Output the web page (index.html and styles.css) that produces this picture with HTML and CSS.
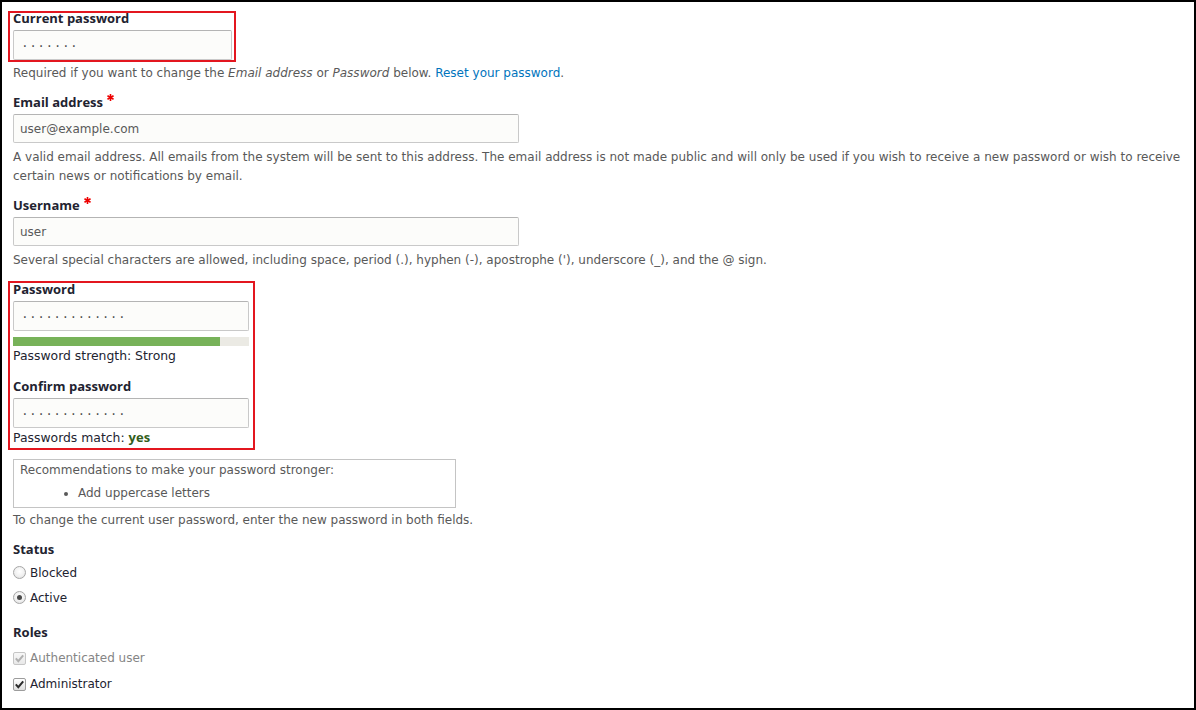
FILE: index.html
```html
<!DOCTYPE html>
<html lang="en">
<head>
<meta charset="utf-8">
<title>Account settings</title>
<link rel="stylesheet" href="styles.css">
</head>
<body>
<div class="page">
  <div class="highlight highlight-current">
    <label class="label label-in-box" for="current-pass">Current password</label>
    <input id="current-pass" class="text-input input-current pass-dots" type="text" value="·······" readonly>
  </div>
  <div class="description desc-after-box">Required if you want to change the <em>Email address</em> or <em>Password</em> below. <a href="#" class="link">Reset your password</a>.</div>

  <div class="form-item">
    <label class="label" for="mail">Email address <span class="required"><svg width="7" height="7" viewBox="0 0 7 7"><g stroke="#e00" stroke-width="1.6" stroke-linecap="butt"><line x1="3.5" y1="0" x2="3.5" y2="7"/><line x1="0.47" y1="1.75" x2="6.53" y2="5.25"/><line x1="0.47" y1="5.25" x2="6.53" y2="1.75"/></g></svg></span></label>
    <input id="mail" class="text-input input-wide" type="text" value="user@example.com" readonly>
    <div class="description">A valid email address. All emails from the system will be sent to this address. The email address is not made public and will only be used if you wish to receive a new password or wish to receive certain news or notifications by email.</div>
  </div>

  <div class="form-item">
    <label class="label" for="name">Username <span class="required"><svg width="7" height="7" viewBox="0 0 7 7"><g stroke="#e00" stroke-width="1.6" stroke-linecap="butt"><line x1="3.5" y1="0" x2="3.5" y2="7"/><line x1="0.47" y1="1.75" x2="6.53" y2="5.25"/><line x1="0.47" y1="5.25" x2="6.53" y2="1.75"/></g></svg></span></label>
    <input id="name" class="text-input input-wide" type="text" value="user" readonly>
    <div class="description">Several special characters are allowed, including space, period (.), hyphen (-), apostrophe ('), underscore (_), and the @ sign.</div>
  </div>

  <div class="highlight highlight-pass">
    <label class="label label-in-box" for="pass1">Password</label>
    <input id="pass1" class="text-input input-pass pass-dots" type="text" value="·············" readonly>
    <div class="strength-meter"><div class="strength-fill" style="width: 87.7%"></div></div>
    <div class="strength-text">Password strength: Strong</div>
    <label class="label label-confirm" for="pass2">Confirm password</label>
    <input id="pass2" class="text-input input-pass input-confirm pass-dots" type="text" value="·············" readonly>
    <div class="match-text">Passwords match: <span class="match-yes">yes</span></div>
  </div>

  <div class="suggestions">
    <div class="suggestions-title">Recommendations to make your password stronger:</div>
    <ul class="suggestions-list">
      <li>Add uppercase letters</li>
    </ul>
  </div>
  <div class="description desc-pass">To change the current user password, enter the new password in both fields.</div>

  <div class="label label-group">Status</div>
  <div class="option-row radio-row">
    <span class="radio"></span><span class="option-label">Blocked</span>
  </div>
  <div class="option-row radio-row">
    <span class="radio is-checked"></span><span class="option-label">Active</span>
  </div>

  <div class="label label-group label-roles">Roles</div>
  <div class="option-row check-row check-first">
    <span class="checkbox is-disabled"><svg width="11" height="11" viewBox="0 0 11 11"><path d="M1.8 5.4 L4.3 8.2 L9.2 2.4" fill="none" stroke="#b0b0b0" stroke-width="2"/></svg></span><span class="option-label is-disabled">Authenticated user</span>
  </div>
  <div class="option-row check-row">
    <span class="checkbox"><svg width="11" height="11" viewBox="0 0 11 11"><path d="M1.8 5.4 L4.3 8.2 L9.2 2.4" fill="none" stroke="#2b2b2b" stroke-width="2"/></svg></span><span class="option-label">Administrator</span>
  </div>
</div>
</body>
</html>
```

FILE: styles.css
```css
html, body {
  margin: 0;
  padding: 0;
  background: #fff;
}

.page {
  box-sizing: border-box;
  width: 1196px;
  height: 710px;
  border: 2px solid #000;
  padding: 9px 11px 0 11px;
  font-family: "DejaVu Sans", "Open Sans", sans-serif;
  color: #222330;
  overflow: hidden;
}

.highlight {
  border: 2px solid #e3161f;
  margin-left: -5px;
  padding: 0 2px 0 3px;
  width: fit-content;
}

.highlight-pass {
  margin-top: 11px;
  padding: 0 4px 1px 3px;
}

.label {
  display: block;
  font-family: "Open Sans", "DejaVu Sans", sans-serif;
  font-size: 13px;
  font-weight: 700;
  line-height: 18px;
  color: #222330;
}

.label-in-box {
  line-height: 12px;
  margin-top: -1px;
}

.highlight-pass .label-in-box {
  margin-top: 0;
}

.required {
  display: inline-block;
  width: 7px;
  height: 7px;
  margin-left: 1px;
  vertical-align: 6px;
  line-height: 0;
}

.required svg {
  display: block;
}

.text-input {
  display: block;
  box-sizing: border-box;
  height: 29px;
  margin: 3px 0 0 0;
  padding: 0 6px;
  border: 1px solid #c9c9c9;
  border-top-color: #b4b4b4;
  border-radius: 2px;
  background: #fcfcfa;
  font-family: "DejaVu Sans", "Open Sans", sans-serif;
  font-size: 12px;
  color: #595959;
  outline: none;
}

.input-current {
  width: 219px;
  height: 30px;
  margin-top: 6px;
}

.input-wide {
  width: 506px;
}

.input-pass {
  width: 236px;
  height: 30px;
  margin-top: 6px;
}

.input-confirm {
  margin-top: 3px;
}

.pass-dots {
  font-family: "Open Sans", "DejaVu Sans", sans-serif;
  letter-spacing: 4.4px;
  padding-left: 9px;
  font-size: 14px;
  color: #444;
}

.input-current.pass-dots {
  letter-spacing: 4.5px;
}

.description {
  font-size: 12px;
  line-height: 19px;
  color: #595959;
  margin-top: 5px;
}

.desc-after-box {
  margin-top: 2px;
}

.desc-pass {
  margin-top: 3px;
}

.description em {
  font-style: italic;
}

.link {
  color: #0074bd;
  text-decoration: none;
}

.form-item {
  margin-top: 10px;
}

.strength-meter {
  width: 236px;
  height: 9px;
  margin-top: 6px;
  background: #ebeae4;
}

.strength-fill {
  height: 100%;
  background: #77b259;
}

.strength-text {
  font-size: 12.4px;
  line-height: 18px;
  margin-top: 1px;
  color: #222330;
}

.label-confirm {
  margin-top: 12px;
}

.match-text {
  font-size: 12.4px;
  line-height: 18px;
  color: #222330;
}

.match-yes {
  font-family: "Open Sans", "DejaVu Sans", sans-serif;
  font-size: 13px;
  font-weight: 700;
  color: #325e1c;
}

.suggestions {
  box-sizing: border-box;
  width: 443px;
  margin-top: 9px;
  border: 1px solid #c4c4c4;
  padding: 1px 6px 4px 6px;
  font-size: 12px;
  line-height: 19px;
  color: #595959;
}

.suggestions-list {
  margin: 4px 0 0 0;
  padding: 0 0 0 58px;
  list-style: disc;
}

.label-group {
  margin-top: 10px;
}

.option-row {
  display: flex;
  align-items: center;
  font-size: 12px;
}

.radio-row {
  height: 25px;
}

.label-group + .radio-row {
  margin-top: 2px;
}

.label-roles {
  margin-top: 13px;
}

.check-row {
  height: 26px;
}

.check-first {
  margin-top: 4px;
}

.radio {
  box-sizing: border-box;
  width: 13px;
  height: 13px;
  margin-right: 4px;
  border: 1px solid #a6a6a6;
  border-radius: 50%;
  background: radial-gradient(circle at 50% 40%, #ffffff 0%, #f0f0f0 55%, #d8d8d8 100%);
  position: relative;
}

.radio.is-checked::after {
  content: "";
  position: absolute;
  left: 3px;
  top: 3px;
  width: 5px;
  height: 5px;
  border-radius: 50%;
  background: #4a4a4a;
}

.checkbox {
  box-sizing: border-box;
  width: 13px;
  height: 13px;
  margin-right: 4px;
  border: 1px solid #9c9c9c;
  border-radius: 2px;
  background: linear-gradient(#ffffff, #dedede);
  display: flex;
  align-items: center;
  justify-content: center;
}

.checkbox.is-disabled {
  border-color: #c6c6c6;
  background: linear-gradient(#f8f8f8, #e8e8e8);
}

.checkbox svg {
  display: block;
}

.option-label {
  line-height: 18px;
  color: #222330;
}

.option-label.is-disabled {
  color: #858585;
}
```
